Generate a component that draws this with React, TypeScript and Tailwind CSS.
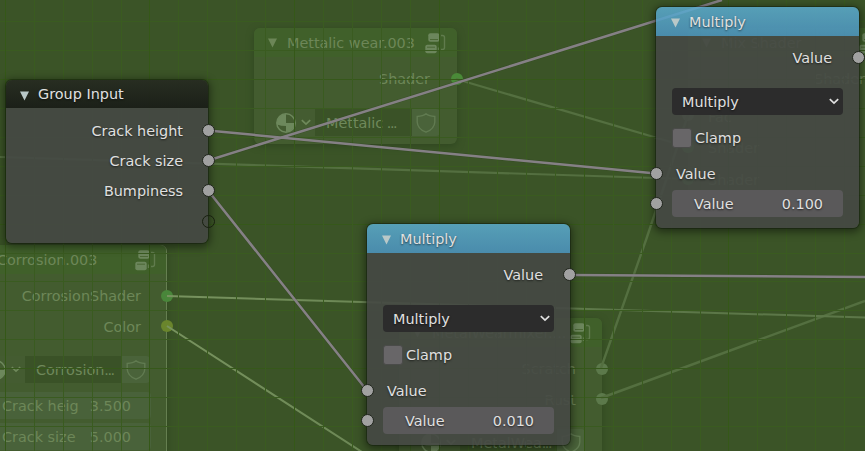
import type { ReactNode } from 'react';
import clsx from 'clsx';

const columns = Array.from({ length: 30 }, (_, i) => i);
const rows = Array.from({ length: 16 }, (_, i) => i);

function Grid() {
  return (
    <svg className="absolute inset-0" width="865" height="451" shapeRendering="crispEdges">
      {rows.map((i) => (
        <rect key={i} x="0" y={Math.round(21.1 + i * 28.93)} width="865" height="1" fill={i % 5 === 2 ? '#36581a' : '#3a5b20'} />
      ))}
      {columns.map((i) => (
        <rect key={i} x={Math.floor(5.2 + i * 28.95)} y="0" width="1" height="451" fill={i % 5 === 0 ? '#355818' : '#3a5b20'} />
      ))}
    </svg>
  );
}

function FadedLinks() {
  return (
    <svg className="absolute inset-0" width="865" height="451" fill="none" strokeWidth="2.2">
      <defs>
        <linearGradient id="fade" gradientUnits="userSpaceOnUse" x1="167" y1="0" x2="620" y2="0">
          <stop offset="0" stopColor="#78935f" />
          <stop offset="1" stopColor="#5c7748" />
        </linearGradient>
      </defs>
      <path d="M0 157L688 179M456 79L688 147" stroke="#546f40" />
      <path d="M601 368L646 240L688 115M601 398L865 301" stroke="#546f40" strokeWidth="2.4" />
      <path d="M167 296L865 317.5M167 326L362 452" stroke="url(#fade)" strokeWidth="2" />
    </svg>
  );
}

function Links() {
  return (
    <svg className="absolute inset-0" width="865" height="451" fill="none">
      <g stroke="#2c3b22" strokeOpacity=".3" strokeWidth="3.6">
        <path d="M208 130.5L656 173.5M208 160.5L722 0M208 190.5L367 390.5M570 275L865 277" />
      </g>
      <g stroke="#858085" strokeWidth="2.5">
        <path d="M208 130.5L656 173.5M208 160.5L722 0M208 190.5L367 390.5M570 275L865 277" />
      </g>
    </svg>
  );
}

function Triangle({ className }: { className: string }) {
  return (
    <svg className={clsx('shrink-0', className)} width="9" height="10" viewBox="0 0 9 10">
      <path d="M0 .5H9L4.5 9.5Z" fill="currentColor" />
    </svg>
  );
}

function Chevron() {
  return (
    <svg className="shrink-0" width="10" height="7" viewBox="0 0 10 7" fill="none" stroke="currentColor" strokeWidth="1.7">
      <path d="M.8 1.2L5 5.2L9.2 1.2" />
    </svg>
  );
}

function GroupIcon() {
  return (
    <svg className="mt-px shrink-0" width="21" height="21" viewBox="0 0 21 21">
      <rect x="3.3" y=".3" width="11.2" height="8.5" rx="2" fill="#6c865c" />
      <path d="M5 6.5H13" stroke="#4c6836" />
      <rect x=".3" y="11.8" width="11.4" height="8.5" rx="2" fill="#6c865c" />
      <path d="M2 14.2H10" stroke="#4c6836" />
      <path d="M16 2.5H17.5Q19.5 2.5 19.5 4.5V14.5Q19.5 16.5 17.5 16.5H16M13.5 14.5V18" fill="none" stroke="#607b4d" strokeWidth="1.4" />
    </svg>
  );
}

function MaterialIcon() {
  return (
    <svg className="shrink-0" width="20" height="20" viewBox="0 0 20 20">
      <circle cx="10" cy="10" r="9.2" fill="none" stroke="#6d885c" strokeWidth="1.5" />
      <path d="M10 10V1A9 9 0 0 0 1 11.5Q5 13 10 13ZM10 10H19A9 9 0 0 1 10 19Z" fill="#6d885c" />
    </svg>
  );
}

function Shield() {
  return (
    <svg width="20" height="20" viewBox="0 0 20 20" fill="none" stroke="#617b51" strokeWidth="1.4">
      <path d="M10 .8Q7 3.3 1.2 3.5V9Q1.5 16 10 19.2Q18.5 16 18.8 9V3.5Q13 3.3 10 .8Z" />
    </svg>
  );
}

function MaterialField({ name }: { name: string }) {
  return (
    <div className="flex h-[27px] text-[#6f895b]">
      <div className="flex w-[45px] items-center gap-[5px] rounded-l bg-[#445c31] pl-[6px]">
        <MaterialIcon />
        <Chevron />
      </div>
      <div className="flex w-[97px] items-center whitespace-pre bg-[#3a5227] pl-[11px]">
        <span className="[word-spacing:-1px]">{name}</span>
        <span className="tracking-[-1.5px]">...</span>
      </div>
      <div className="flex w-[28px] items-center justify-center rounded-r bg-[#4a633a]">
        <Shield />
      </div>
    </div>
  );
}

function FadedHeader({ title }: { title: string }) {
  return (
    <div className="flex h-[29px] items-center rounded-t-[6px] bg-[#40602a] pl-[14px]">
      <Triangle className="mr-[10px] text-[#6c8657]" />
      <span className="w-[138px] whitespace-nowrap">{title}</span>
      <GroupIcon />
    </div>
  );
}

function FadedSocket({ className }: { className: string }) {
  return <i className={clsx('absolute size-[12px] rounded-full', className)} />;
}

function FadedNodes() {
  return (
    <div className="text-[#6d8758]">
      <section className="absolute left-[254px] top-[28px] h-[116px] w-[203px] rounded-[6px] bg-[#435c2f] shadow-[0_2px_7px_#2f4720]">
        <FadedHeader title="Mettalic wear.003" />
        <div className="flex h-[52px] items-center justify-end pb-[8px] pr-[27px]">Shader</div>
        <div className="pl-[16px]"><MaterialField name="Mettalic " /></div>
        <FadedSocket className="right-[-6px] top-[45px] bg-[#4a8a38]" />
      </section>

      <section className="absolute left-[-37px] top-[245px] h-[240px] w-[204px] rounded-[6px] border border-[#657f50] bg-[#435c2f] shadow-[0_2px_7px_#2f4720]">
        <div className="-mt-px"><FadedHeader title="Corrosion.003" /></div>
        <div className="flex h-[38px] items-end justify-end pb-[6px] pr-[25px]">CorrosionShader</div>
        <div className="flex h-[30px] items-center justify-end pr-[25px]">Color</div>
        <div className="pl-[16px] pt-[14px]"><MaterialField name="Corrosion" /></div>
        <div className="ml-[16px] mt-[9px] flex h-[27px] w-[171px] items-center justify-between rounded bg-[#49623a] pl-[22px] pr-[20px]"><span>Crack heig</span><span>3.500</span></div>
        <div className="ml-[16px] mt-[4px] flex h-[27px] w-[171px] items-center justify-between rounded bg-[#49623a] pl-[22px] pr-[20px]"><span>Crack size</span><span>5.000</span></div>
        <FadedSocket className="right-[-7px] top-[44px] bg-[#49863a]" />
        <FadedSocket className="right-[-7px] top-[74px] bg-[#6a852c]" />
      </section>

      <section className="absolute left-[399px] top-[318px] h-[160px] w-[203px] rounded-[6px] bg-[#435c2f] shadow-[0_2px_7px_#2f4720]">
        <FadedHeader title="MetalWearmixer...." />
        <div className="flex h-[43px] items-center justify-end pr-[26px]">Scratch</div>
        <div className="flex h-[20px] items-center justify-end pr-[26px]">Rust</div>
        <div className="pl-[16px] pt-[19px]"><MaterialField name="MetalWea" /></div>
        <FadedSocket className="right-[-6px] top-[45px] bg-[#5c794b]" />
        <FadedSocket className="right-[-6px] top-[75px] bg-[#5c794b]" />
      </section>

      <section className="absolute left-[688px] top-[28px] h-[172px] w-[203px] rounded-[6px] bg-[#435c2f]">
        <FadedHeader title="Mix Shader" />
        <div className="flex h-[44px] items-center justify-end pr-[26px]">Shader</div>
        <div className="flex h-[32px] items-center pl-[20px]">Fac</div>
        <div className="flex h-[30px] items-center pl-[20px]">Shader</div>
        <div className="flex h-[34px] items-center pl-[20px]">Shader</div>
        <FadedSocket className="left-[-6px] top-[81px] bg-[#5c794b]" />
        <FadedSocket className="left-[-6px] top-[113px] bg-[#49863a]" />
        <FadedSocket className="left-[-6px] top-[145px] bg-[#49863a]" />
      </section>
    </div>
  );
}

function Socket({ className }: { className: string }) {
  return <i className={clsx('absolute size-[13px] rounded-full border', className)} />;
}

function Node({ className, header, title, children }: { className: string; header: string; title: string; children: ReactNode }) {
  return (
    <section className={clsx('absolute rounded-[6px] shadow-[0_0_0_1px_rgba(16,24,10,0.4),0_2px_8px_2px_rgba(0,0,0,0.46)] [text-shadow:0_1px_2px_rgba(0,0,0,0.6)]', className)}>
      <div className={clsx('flex items-center rounded-t-[6px]', header)}>
        <Triangle className="mr-[9px] mt-[3px] text-[#b9c8c8]" />
        <span>{title}</span>
      </div>
      {children}
    </section>
  );
}

function MultiplyNode({ className, value }: { className: string; value: string }) {
  return (
    <Node className={clsx('w-[203px]', className)} title="Multiply" header="h-[29px] pl-[15px] bg-linear-to-b from-[#5bacd0]/85 to-[#4c93be]/88">
      <div className="h-[192px] rounded-b-[6px] bg-[#454944]/91 px-[16px] pt-[7px]">
        <div className="flex h-[30px] items-center justify-end pr-[11px]">Value</div>
        <div className="mt-[15px] flex h-[27px] w-[171px] items-center justify-between rounded-[4px] bg-[#2c2c2c] pl-[10px] pr-[4px]">
          <span>Multiply</span>
          <Chevron />
        </div>
        <div className="mt-[13px] flex h-[20px] items-center gap-[3px]">
          <i className="size-[20px] rounded-[3px] border border-[#4a4b49] bg-[#686668]" />
          <span>Clamp</span>
        </div>
        <div className="mt-[11px] flex h-[30px] items-center pl-[4px]">Value</div>
        <div className="mt-px flex h-[27px] w-[171px] items-center justify-between rounded-[4px] bg-[#5a595a] pl-[22px] pr-[20px]">
          <span>Value</span>
          <span>{value}</span>
        </div>
      </div>
      <Socket className="right-[-6px] top-[44px] border-[#20251c] bg-[#a1a1a1]" />
      <Socket className="left-[-6px] top-[160px] border-[#20251c] bg-[#a1a1a1]" />
      <Socket className="left-[-6px] top-[190px] border-[#20251c] bg-[#a1a1a1]" />
    </Node>
  );
}

export default function App() {
  return (
    <main className="relative h-[451px] w-[865px] overflow-hidden bg-[#3b5427] font-['DejaVu_Sans',sans-serif] text-[14.4px] leading-[20px] text-[#e0e0e0]">
      <FadedNodes />
      <FadedLinks />
      <Grid />
      <Links />
      <Node className="left-[6px] top-[80px] w-[202px]" title="Group Input" header="h-[28px] pl-[14px] bg-linear-to-b from-[#262a21]/92 to-[#191c17]/93">
        <div className="flex h-[135px] flex-col items-end rounded-b-[6px] bg-[#454944]/91 pr-[25px] pt-[8px]">
          <span className="flex h-[30px] items-center">Crack height</span>
          <span className="flex h-[30px] items-center">Crack size</span>
          <span className="flex h-[30px] items-center">Bumpiness</span>
        </div>
        <Socket className="right-[-7px] top-[44px] border-[#20251c] bg-[#a1a1a1]" />
        <Socket className="right-[-7px] top-[74px] border-[#20251c] bg-[#a1a1a1]" />
        <Socket className="right-[-7px] top-[104px] border-[#20251c] bg-[#a1a1a1]" />
        <Socket className="right-[-7px] top-[135px] border-[#18200f]" />
      </Node>
      <MultiplyNode className="left-[656px] top-[7px]" value="0.100" />
      <MultiplyNode className="left-[367px] top-[224px]" value="0.010" />
    </main>
  );
}
